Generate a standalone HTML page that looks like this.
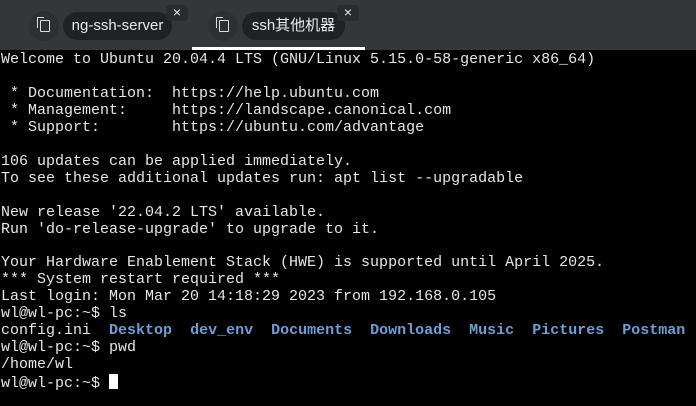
<!DOCTYPE html><html><head><meta charset="utf-8"><style>
body{margin:0;width:696px;height:406px;background:#000;overflow:hidden;position:relative;font-family:"Liberation Sans","Noto Sans CJK SC",sans-serif}
.hdr{position:absolute;left:0;top:0;width:696px;height:50px;background:#35363a}
.ic{position:absolute;top:11px;width:30px;height:30px;border-radius:50%;background:#2e2f32}
.ic i{position:absolute;left:11px;top:9px;width:8px;height:10px;border:1.5px solid #ddd;border-radius:1px}
.ic b{position:absolute;left:8px;top:6px;width:6px;height:10px;border-left:1.5px solid #ddd;border-top:1.5px solid #ddd}
.chip{position:absolute;top:12px;height:28px;border-radius:14px;background:#202124;color:#e8eaed;font-size:15px;line-height:28px;text-align:center}
.x{position:absolute;top:5px;width:22px;height:16px;border-radius:4px;background:#2a2b2e;color:#e8eaed;font-size:14px;line-height:15px;text-align:center}
.ul{position:absolute;left:192px;top:47px;width:173px;height:3px;background:#fff}
pre{position:absolute;left:1px;top:52px;margin:0;font-family:"Liberation Mono",monospace;font-size:15px;line-height:16.95px;color:#e6e6e6}
.d{color:#6a9fd8;font-weight:bold}
.cur{display:inline-block;width:9px;height:15px;background:#fff;vertical-align:-2px}
</style></head><body>
<div class="hdr">
<div class="ic" style="left:29px"><b></b><i></i></div>
<div class="chip" style="left:63px;width:109px">ng-ssh-server</div>
<div class="x" style="left:166px">×</div>
<div class="ic" style="left:208px"><b></b><i></i></div>
<div class="chip" style="left:242px;width:103px">ssh其他机器</div>
<div class="x" style="left:337px">×</div>
<div class="ul"></div>
</div>
<pre>Welcome to Ubuntu 20.04.4 LTS (GNU/Linux 5.15.0-58-generic x86_64)

 * Documentation:  https://help.ubuntu.com
 * Management:     https://landscape.canonical.com
 * Support:        https://ubuntu.com/advantage

106 updates can be applied immediately.
To see these additional updates run: apt list --upgradable

New release '22.04.2 LTS' available.
Run 'do-release-upgrade' to upgrade to it.

Your Hardware Enablement Stack (HWE) is supported until April 2025.
*** System restart required ***
Last login: Mon Mar 20 14:18:29 2023 from 192.168.0.105
wl@wl-pc:~$ ls
config.ini  <span class="d">Desktop</span>  <span class="d">dev_env</span>  <span class="d">Documents</span>  <span class="d">Downloads</span>  <span class="d">Music</span>  <span class="d">Pictures</span>  <span class="d">Postman</span>
wl@wl-pc:~$ pwd
/home/wl
wl@wl-pc:~$ <span class="cur"></span></pre>
</body></html>
